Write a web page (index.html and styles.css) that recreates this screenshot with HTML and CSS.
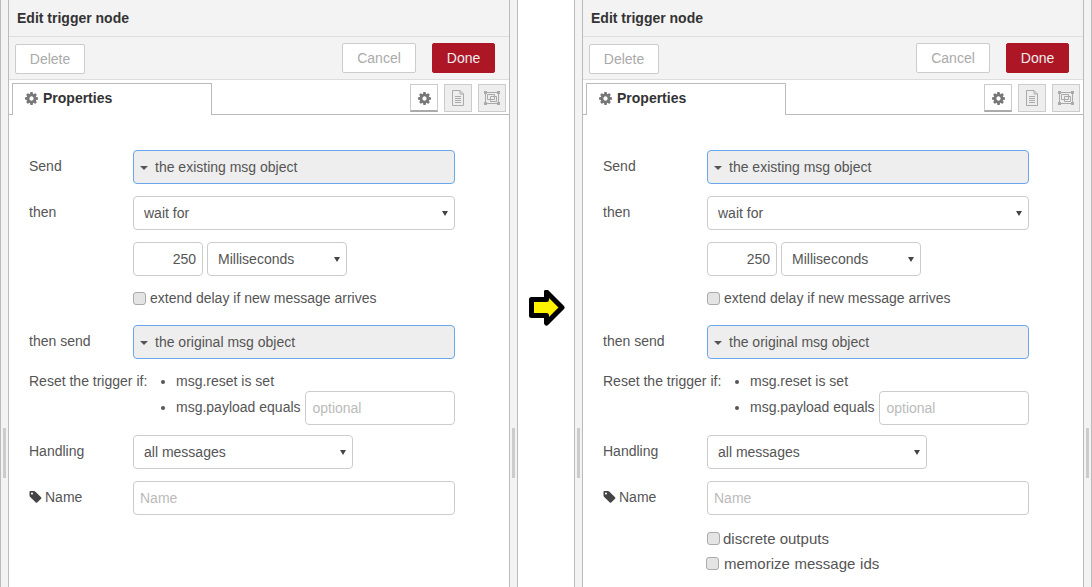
FILE: index.html
```html
<!DOCTYPE html>
<html>

<head>
    <title>Edit trigger node</title>
    <link rel="stylesheet" href="styles.css">
</head>

<body>
    <svg class="defs" width="0" height="0">
        <symbol id="cog" viewBox="0 0 1792 1792">
            <path d="M1152 896q0-106-75-181t-181-75-181 75-75 181 75 181 181 75 181-75 75-181zm512-109v222q0 12-8 23t-20 13l-185 28q-19 54-39 91 35 50 107 138 10 12 10 25t-9 23q-27 37-99 108t-94 71q-12 0-26-9l-138-108q-44 23-91 38-16 136-29 186-7 28-36 28h-222q-14 0-24.5-8.5t-11.5-21.5l-28-184q-49-16-90-37l-141 107q-10 9-25 9-14 0-25-11-126-114-165-168-7-10-7-23 0-12 8-23 15-21 51-66.5t54-70.5q-27-50-41-99l-183-27q-13-2-21-12.5t-8-23.5v-222q0-12 8-23t19-13l186-28q14-46 39-92-40-57-107-138-10-12-10-24 0-10 9-23 26-36 98.5-107.5t94.5-71.5q13 0 26 10l138 107q44-23 91-38 16-136 29-186 7-28 36-28h222q14 0 24.5 8.5t11.5 21.5l28 184q49 16 90 37l142-107q9-9 24-9 13 0 25 10 129 119 165 170 7 8 7 22 0 12-8 23-15 21-51 66.5t-54 70.5q26 50 41 98l183 28q13 2 21 12.5t8 23.5z" />
        </symbol>
        <symbol id="tag" viewBox="0 0 1536 1792">
            <path d="M448 448q0-53-37.5-90.5t-90.5-37.5-90.5 37.5-37.5 90.5 37.5 90.5 90.5 37.5 90.5-37.5 37.5-90.5zm1067 576q0 53-37 90l-491 492q-39 37-91 37-53 0-90-37l-715-716q-38-37-64.5-101t-26.5-117v-416q0-52 38-90t90-38h416q53 0 117 26.5t102 64.5l715 714q37 39 37 91z" />
        </symbol>
        <symbol id="doc" viewBox="0 0 16 18">
            <path d="M2.500 1.500h7.500l3.500 3.500v11.500h-11z M10 1.500v3.500h3.500 M5 7.500h6 M5 9.500h6 M5 11.500h6 M5 13.500h6" fill="none" stroke="currentColor" />
        </symbol>
        <symbol id="frame" viewBox="0 0 18 16">
            <path d="M2.500 2.500h13v11h-13z M4.500 4.500h7v5h-7z M7.500 6.500h6v5h-6z" fill="none" stroke="currentColor" />
            <path d="M1 1h3v3h-3z M14 1h3v3h-3z M1 12h3v3h-3z M14 12h3v3h-3z" fill="currentColor" />
        </symbol>
    </svg>

    <div class="page">
        <section class="shot">
            <div class="gutter"><div class="handle"></div></div>
            <div class="panel">
                <div class="title">Edit trigger node</div>
                <div class="toolbar">
                    <button class="btn btn-delete">Delete</button>
                    <div class="toolbar-right">
                        <button class="btn btn-cancel">Cancel</button>
                        <button class="btn btn-done">Done</button>
                    </div>
                </div>
                <div class="tabs">
                    <div class="tab"><svg class="icon-cog"><use href="#cog" /></svg>Properties</div>
                    <div class="tab-buttons">
                        <div class="tab-btn active"><svg class="icon-cog"><use href="#cog" /></svg></div>
                        <div class="tab-btn"><svg class="icon-doc"><use href="#doc" /></svg></div>
                        <div class="tab-btn"><svg class="icon-frame"><use href="#frame" /></svg></div>
                    </div>
                </div>
                <form class="form">
                    <div class="row">
                        <label>Send</label>
                        <div class="typed"><i class="caret"></i>the existing msg object</div>
                    </div>
                    <div class="row">
                        <label>then</label>
                        <select class="wide"><option>wait for</option></select>
                    </div>
                    <div class="row row-delay">
                        <label></label>
                        <input class="num" type="text" value="250">
                        <select class="units"><option>Milliseconds</option></select>
                    </div>
                    <div class="row row-check">
                        <label></label>
                        <input class="check" type="checkbox">
                        <span>extend delay if new message arrives</span>
                    </div>
                    <div class="row">
                        <label>then send</label>
                        <div class="typed"><i class="caret"></i>the original msg object</div>
                    </div>
                    <div class="row row-reset">
                        <label>Reset the trigger if:</label>
                        <ul>
                            <li>msg.reset is set</li>
                            <li>msg.payload equals <input class="optional" type="text" placeholder="optional"></li>
                        </ul>
                    </div>
                    <div class="row">
                        <label>Handling</label>
                        <select class="handling"><option>all messages</option></select>
                    </div>
                    <div class="row">
                        <label><svg class="icon-tag"><use href="#tag" /></svg>Name</label>
                        <input class="wide" type="text" placeholder="Name">
                    </div>
                </form>
            </div>
            <div class="gutter"><div class="handle"></div></div>
        </section>

        <div class="middle">
            <svg class="arrow" width="36" height="36" viewBox="0 0 36 36">
                <path d="M2.500 9.500h15v-7.500l15.500 15.500-15.500 15.500v-7.500h-15z" fill="#fff200" stroke="#000" stroke-width="5" stroke-linejoin="round" />
            </svg>
        </div>

        <section class="shot">
            <div class="gutter"><div class="handle"></div></div>
            <div class="panel">
                <div class="title">Edit trigger node</div>
                <div class="toolbar">
                    <button class="btn btn-delete">Delete</button>
                    <div class="toolbar-right">
                        <button class="btn btn-cancel">Cancel</button>
                        <button class="btn btn-done">Done</button>
                    </div>
                </div>
                <div class="tabs">
                    <div class="tab"><svg class="icon-cog"><use href="#cog" /></svg>Properties</div>
                    <div class="tab-buttons">
                        <div class="tab-btn active"><svg class="icon-cog"><use href="#cog" /></svg></div>
                        <div class="tab-btn"><svg class="icon-doc"><use href="#doc" /></svg></div>
                        <div class="tab-btn"><svg class="icon-frame"><use href="#frame" /></svg></div>
                    </div>
                </div>
                <form class="form">
                    <div class="row">
                        <label>Send</label>
                        <div class="typed"><i class="caret"></i>the existing msg object</div>
                    </div>
                    <div class="row">
                        <label>then</label>
                        <select class="wide"><option>wait for</option></select>
                    </div>
                    <div class="row row-delay">
                        <label></label>
                        <input class="num" type="text" value="250">
                        <select class="units"><option>Milliseconds</option></select>
                    </div>
                    <div class="row row-check">
                        <label></label>
                        <input class="check" type="checkbox">
                        <span>extend delay if new message arrives</span>
                    </div>
                    <div class="row">
                        <label>then send</label>
                        <div class="typed"><i class="caret"></i>the original msg object</div>
                    </div>
                    <div class="row row-reset">
                        <label>Reset the trigger if:</label>
                        <ul>
                            <li>msg.reset is set</li>
                            <li>msg.payload equals <input class="optional" type="text" placeholder="optional"></li>
                        </ul>
                    </div>
                    <div class="row">
                        <label>Handling</label>
                        <select class="handling"><option>all messages</option></select>
                    </div>
                    <div class="row">
                        <label><svg class="icon-tag"><use href="#tag" /></svg>Name</label>
                        <input class="wide" type="text" placeholder="Name">
                    </div>
                    <div class="row row-discrete">
                        <label></label>
                        <input class="check" type="checkbox">
                        <span>discrete outputs</span>
                    </div>
                    <div class="row row-memorize">
                        <label></label>
                        <input class="check" type="checkbox">
                        <span>memorize message ids</span>
                    </div>
                </form>
            </div>
            <div class="gutter"><div class="handle"></div></div>
        </section>
    </div>
</body>

</html>
```

FILE: styles.css
```css
* {
    box-sizing: border-box;
}

html,
body {
    margin: 0;
    height: 100%;
    overflow: hidden;
    background: #fff;
}

body {
    font-family: "Liberation Sans", Arial, sans-serif;
    font-size: 14px;
    color: #555;
}

.defs {
    position: absolute;
}

.page {
    display: flex;
    height: 587px;
}

.shot {
    display: flex;
    flex: none;
    width: 518px;
    border-left: 1px solid #bbb;
    border-right: 1px solid #bbb;
}

.gutter {
    flex: none;
    width: 7px;
    background: #f3f3f3;
    padding: 428px 2px 0;
}

.handle {
    height: 50px;
    background: #ccc;
}

.panel {
    flex: 1;
    min-width: 0;
    border-left: 1px solid #bbb;
    border-right: 1px solid #bbb;
    background: #fff;
}

.middle {
    flex: none;
    width: 56px;
    padding: 290px 0 0 11px;
}

.arrow {
    display: block;
}

.title {
    height: 37px;
    padding: 10px 8px 0;
    font-weight: bold;
    color: #333;
    background: #f3f3f3;
    border-bottom: 1px solid #ddd;
}

.toolbar {
    display: flex;
    justify-content: space-between;
    height: 43px;
    padding: 6px 14px 0 6px;
    background: #f3f3f3;
    border-bottom: 1px solid #ddd;
}

.toolbar-right {
    display: flex;
    gap: 16px;
}

.btn {
    height: 30px;
    padding: 0;
    font: inherit;
    border: 1px solid #ccc;
    border-radius: 2px;
    background: #fff;
    color: #aaa;
}

.btn-delete {
    width: 70px;
    margin-top: 1px;
}

.btn-cancel {
    width: 74px;
}

.btn-done {
    width: 63px;
    border-color: #ad1625;
    background: #ad1625;
    color: #eee;
}

.tabs {
    display: flex;
    justify-content: space-between;
    height: 35px;
    padding: 3px 3px 0 3px;
    border-bottom: 1px solid #bbb;
}

.tab {
    display: flex;
    align-items: center;
    width: 200px;
    height: 32px;
    padding: 0 0 3px 11px;
    font-weight: bold;
    color: #333;
    background: #fff;
    border: 1px solid #bbb;
    border-bottom: none;
    border-radius: 1px 1px 0 0;
}

.tab .icon-cog {
    margin-right: 4px;
}

.icon-cog {
    width: 15px;
    height: 15px;
    fill: #777;
}

.tab-buttons {
    display: flex;
    gap: 6px;
    padding-top: 1px;
}

.tab-btn {
    display: flex;
    align-items: center;
    justify-content: center;
    width: 28px;
    height: 28px;
    background: #eee;
    border: 1px solid #ccc;
    color: #aaa;
}

.tab-btn.active {
    background: #fff;
    border-bottom: 2px solid #aaa;
    padding-top: 1px;
}

.icon-doc {
    width: 16px;
    height: 18px;
}

.icon-frame {
    width: 18px;
    height: 16px;
}

.form {
    padding: 35px 20px 0;
}

.row {
    display: flex;
    align-items: flex-start;
    margin-bottom: 12px;
}

.row label {
    flex: none;
    width: 104px;
    padding-top: 8px;
    white-space: nowrap;
}

.typed,
.row select,
.row input[type="text"] {
    height: 34px;
    margin: 0;
    font: inherit;
    color: #555;
    background: #fff;
    border: 1px solid #ccc;
    border-radius: 4px;
}

.typed {
    display: flex;
    align-items: center;
    width: 322px;
    padding-left: 6px;
    background: #eee;
    border-color: #6aa6ea;
}

.caret {
    width: 0;
    height: 0;
    margin: 2px 7px 0 0;
    border: 4px solid transparent;
    border-top: 4px solid #555;
    border-bottom: none;
}

.row select {
    appearance: none;
    padding-left: 10px;
    background: #fff url("data:image/svg+xml,%3Csvg xmlns='http://www.w3.org/2000/svg' width='6' height='5'%3E%3Cpath d='M0 0h6l-3 5z' fill='%23444'/%3E%3C/svg%3E") no-repeat right 6px center;
}

.row input[type="text"] {
    padding: 0 6px;
    outline: none;
}

.row input::placeholder {
    color: #bbb;
    opacity: 1;
}

.row .wide {
    width: 322px;
}

.row .num {
    width: 70px;
    text-align: right;
}

.row .units {
    width: 140px;
    margin-left: 4px;
}

.row .handling {
    width: 220px;
}

.row-reset {
    margin-bottom: 10px;
}

.row-reset label {
    padding-top: 0;
    line-height: 20px;
}

.row-reset ul {
    margin: 0;
    padding: 0 0 0 43px;
    line-height: 20px;
}

.row input.optional {
    width: 150px;
    margin-left: 1px;
    vertical-align: middle;
}

.row-check,
.row-discrete,
.row-memorize {
    align-items: center;
    height: 20px;
}

.row-check {
    margin-bottom: 17px;
}

.row-discrete {
    margin-top: 13px;
    margin-bottom: 5px;
    font-size: 15px;
}

.row-memorize {
    font-size: 15px;
}

.row label:empty {
    padding: 0;
}

.check {
    appearance: none;
    flex: none;
    width: 13px;
    height: 13px;
    margin: 0 4px 0 0;
    background: #e4e4e4;
    border: 1px solid #aaa;
    border-radius: 3px;
}

.row-discrete .check {
    margin-right: 3px;
}

.row-memorize .check {
    margin-left: -1px;
    margin-right: 5px;
}

.row-memorize span {
    word-spacing: 0.5px;
}

.icon-tag {
    width: 13px;
    height: 14px;
    margin-right: 3px;
    vertical-align: -2px;
    fill: #444;
}
```
